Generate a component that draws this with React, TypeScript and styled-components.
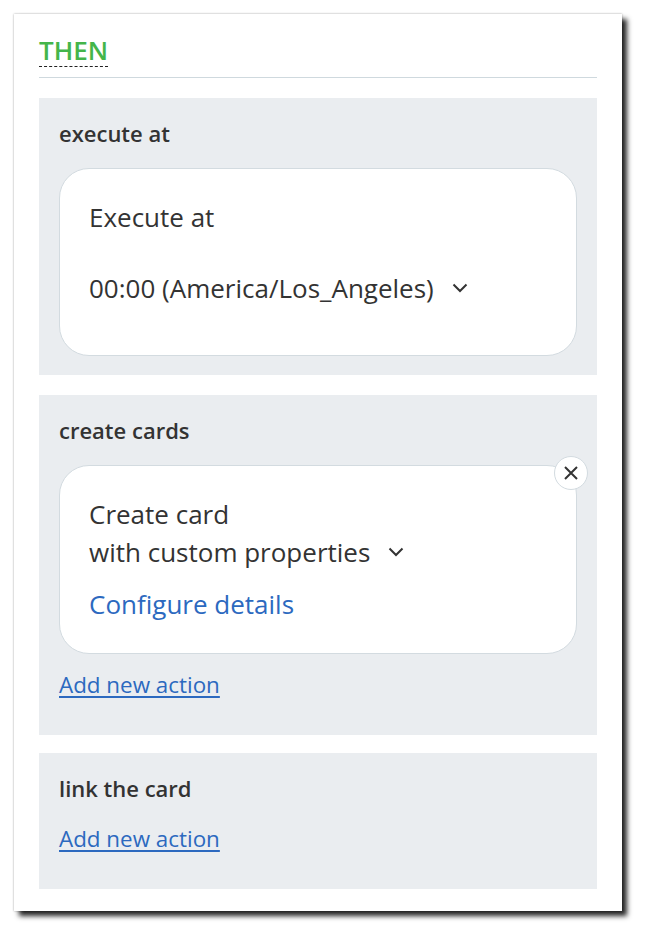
import React from "react";
import styled, { createGlobalStyle } from "styled-components";

const Global = createGlobalStyle`
  html, body { margin: 0; padding: 0; background: #ffffff; }
  body { font-family: "Open Sans", "Noto Sans", sans-serif; color: #333; }
`;

const Page = styled.div`
  padding: 14px 27px 27px 14px;
  width: 649px;
  box-sizing: border-box;
`;

const Panel = styled.div`
  width: 608px;
  box-sizing: border-box;
  background: #fff;
  padding: 21px 25px 22px 25px;
  box-shadow: 0 0 2px rgba(0,0,0,0.35), 5px 5px 5px rgba(0,0,0,0.85);
`;

const HeaderRow = styled.div`
  border-bottom: 1px solid #cfd9de;
  padding-bottom: 10px;
  margin-bottom: 20px;
`;

const Heading = styled.span`
  display: inline-block;
  font-size: 26px;
  font-weight: 600;
  color: #44b54a;
  line-height: 30px;
  border-bottom: 1px dashed #222;
  padding-bottom: 1px;
`;

const Section = styled.section<{ $gap?: number }>`
  background: #eaedf0;
  padding: 20px 20px 19px 20px;
  margin-bottom: ${(p) => p.$gap ?? 20}px;
  display: flex;
  flex-direction: column;
`;

const SectionTitle = styled.div`
  font-size: 22px;
  font-weight: 600;
  line-height: 30px;
  color: #333;
  margin-bottom: 20px;
`;

const Card = styled.div<{ $pt?: number; $pb?: number }>`
  position: relative;
  background: #fff;
  border: 1px solid #d3dbe0;
  border-radius: 30px;
  padding: ${(p) => p.$pt ?? 29}px 30px ${(p) => p.$pb ?? 30}px 29px;
  font-size: 26px;
  color: #333;
`;

const CardLine = styled.div<{ $mb?: number }>`
  line-height: 38px;
  margin-bottom: ${(p) => p.$mb ?? 0}px;
  display: flex;
  align-items: center;
`;

const Chevron = () => (
  <svg width="16" height="10" viewBox="0 0 16 10" style={{ marginLeft: 18 }}>
    <path d="M1.5 1.5 L8 8 L14.5 1.5" fill="none" stroke="#333" strokeWidth="2" />
  </svg>
);

const LinkText = styled.a<{ $size?: number }>`
  color: #2c69bf;
  font-size: ${(p) => p.$size ?? 22.4}px;
  line-height: ${(p) => (p.$size ? 36 : 32)}px;
  cursor: pointer;
`;

const AddLink = styled(LinkText)<{ $mt?: number }>`
  text-decoration: underline;
  text-underline-offset: 3px;
  text-decoration-thickness: 2px;
  align-self: flex-start;
  margin-top: ${(p) => p.$mt ?? 0}px;
  margin-bottom: 15px;
`;

const CloseButton = styled.button`
  position: absolute;
  top: -10px;
  right: -12px;
  width: 34px;
  height: 34px;
  border-radius: 50%;
  background: #fff;
  border: 1px solid #d3dbe0;
  padding: 0;
  display: flex;
  align-items: center;
  justify-content: center;
  cursor: pointer;
`;

export default function App() {
  return (
    <>
      <Global />
      <Page>
        <Panel>
          <HeaderRow>
            <Heading>THEN</Heading>
          </HeaderRow>

          <Section>
            <SectionTitle>execute at</SectionTitle>
            <Card $pb={48}>
              <CardLine $mb={33}>Execute at</CardLine>
              <CardLine>
                00:00 (America/Los_Angeles)
                <Chevron />
              </CardLine>
            </Card>
          </Section>

          <Section $gap={18}>
            <SectionTitle>create cards</SectionTitle>
            <Card $pt={29} $pb={31}>
              <CloseButton aria-label="Remove">
                <svg width="16" height="16" viewBox="0 0 16 16">
                  <path d="M2 2 L14 14 M14 2 L2 14" stroke="#333" strokeWidth="2" />
                </svg>
              </CloseButton>
              <CardLine>Create card</CardLine>
              <CardLine $mb={15}>
                with custom properties
                <Chevron />
              </CardLine>
              <LinkText $size={26}>Configure details</LinkText>
            </Card>
            <AddLink $mt={15}>Add new action</AddLink>
          </Section>

          <Section $gap={0}>
            <SectionTitle>link the card</SectionTitle>
            <AddLink>Add new action</AddLink>
          </Section>
        </Panel>
      </Page>
    </>
  );
}
